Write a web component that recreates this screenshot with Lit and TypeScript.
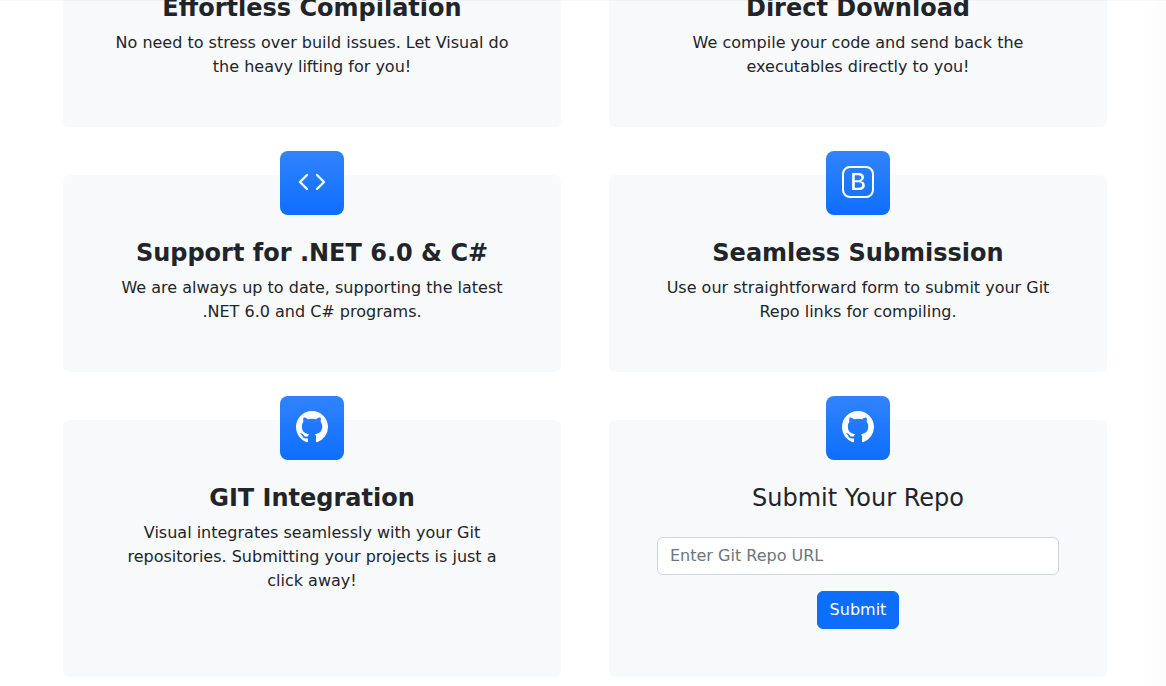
import { LitElement, html, css, svg } from "lit";
import { customElement, property } from "lit/decorators.js";

const icons = {
  collection: svg`<path d="M2.5 3.5a.5.5 0 0 1 0-1h11a.5.5 0 0 1 0 1zm2-2a.5.5 0 0 1 0-1h7a.5.5 0 0 1 0 1zM0 13a1.5 1.5 0 0 0 1.5 1.5h13A1.5 1.5 0 0 0 16 13V6a1.5 1.5 0 0 0-1.5-1.5h-13A1.5 1.5 0 0 0 0 6zm1.5.5A.5.5 0 0 1 1 13V6a.5.5 0 0 1 .5-.5h13a.5.5 0 0 1 .5.5v7a.5.5 0 0 1-.5.5z"/>`,
  download: svg`<path d="M.5 9.9a.5.5 0 0 1 .5.5v2.5a1 1 0 0 0 1 1h12a1 1 0 0 0 1-1v-2.5a.5.5 0 0 1 1 0v2.5a2 2 0 0 1-2 2H2a2 2 0 0 1-2-2v-2.5a.5.5 0 0 1 .5-.5"/><path d="M7.646 11.854a.5.5 0 0 0 .708 0l3-3a.5.5 0 0 0-.708-.708L8.5 10.293V1.5a.5.5 0 0 0-1 0v8.793L5.354 8.146a.5.5 0 1 0-.708.708z"/>`,
  code: svg`<path stroke="currentColor" stroke-width=".12" d="M5.854 4.854a.5.5 0 1 0-.708-.708l-3.5 3.5a.5.5 0 0 0 0 .708l3.5 3.5a.5.5 0 0 0 .708-.708L2.707 8zm4.292 0a.5.5 0 0 1 .708-.708l3.5 3.5a.5.5 0 0 1 0 .708l-3.5 3.5a.5.5 0 0 1-.708-.708L13.293 8z"/>`,
  bootstrap: svg`<path d="M5.062 12h3.475c1.804 0 2.888-.908 2.888-2.396 0-1.102-.761-1.916-1.904-2.034v-.1c.832-.14 1.482-.93 1.482-1.816 0-1.3-.955-2.11-2.542-2.11H5.062zm1.313-4.875V4.658h1.78c.973 0 1.542.457 1.542 1.237 0 .802-.604 1.23-1.764 1.23zm0 3.762V8.162h1.822c1.236 0 1.887.463 1.887 1.348 0 .896-.627 1.377-1.811 1.377z"/><path d="M0 4a4 4 0 0 1 4-4h8a4 4 0 0 1 4 4v8a4 4 0 0 1-4 4H4a4 4 0 0 1-4-4zm4-3a3 3 0 0 0-3 3v8a3 3 0 0 0 3 3h8a3 3 0 0 0 3-3V4a3 3 0 0 0-3-3z"/>`,
  github: svg`<path d="M8 0C3.58 0 0 3.58 0 8c0 3.54 2.29 6.53 5.47 7.59.4.07.55-.17.55-.38 0-.19-.01-.82-.01-1.49-2.01.37-2.53-.49-2.69-.94-.09-.23-.48-.94-.82-1.13-.28-.15-.68-.52-.01-.53.63-.01 1.08.58 1.23.82.72 1.21 1.87.87 2.33.66.07-.52.28-.87.51-1.07-1.78-.2-3.64-.89-3.64-3.95 0-.87.31-1.59.82-2.15-.08-.2-.36-1.02.08-2.12 0 0 .67-.21 2.2.82.64-.18 1.32-.27 2-.27s1.36.09 2 .27c1.53-1.04 2.2-.82 2.2-.82.44 1.1.16 1.92.08 2.12.51.56.82 1.27.82 2.15 0 3.07-1.87 3.75-3.65 3.95.29.25.54.73.54 1.48 0 1.07-.01 1.93-.01 2.2 0 .21.15.46.55.38A8.01 8.01 0 0 0 16 8c0-4.42-3.58-8-8-8"/>`,
};

type IconName = keyof typeof icons;

@customElement("feature-card")
export class FeatureCard extends LitElement {
  @property() icon: IconName = "code";
  @property() heading = "";
  @property({ type: Boolean }) light = false;

  static styles = css`
    :host {
      display: flex;
      flex-direction: column;
      align-items: center;
      box-sizing: border-box;
      min-width: 0;
      padding: 0 48px 48px;
      border-radius: 6px;
      background: #f8f9fb;
      text-align: center;
    }
    .tile {
      display: flex;
      align-items: center;
      justify-content: center;
      box-sizing: border-box;
      width: 64px;
      height: 64px;
      margin: -24px 0 24px;
      padding-bottom: 2px;
      border-radius: 8px;
      color: #fff;
      background: #0d6efd linear-gradient(180deg, rgba(255, 255, 255, 0.15), rgba(255, 255, 255, 0));
    }
    .heading {
      margin: 0 0 8px;
      font-size: 24px;
      line-height: 29px;
      font-weight: 700;
    }
    .light {
      font-weight: 400;
    }
    .body {
      align-self: stretch;
    }
  `;

  render() {
    return html`
      <div class="tile">
        <svg width="32" height="32" viewBox="0 0 16 16" fill="currentColor" aria-hidden="true">${icons[this.icon]}</svg>
      </div>
      <h2 class="heading ${this.light ? "light" : ""}">${this.heading}</h2>
      <div class="body"><slot></slot></div>
    `;
  }
}

const features: { icon: IconName; title: string; text: string }[] = [
  { icon: "collection", title: "Effortless Compilation", text: "No need to stress over build issues. Let Visual do the heavy lifting for you!" },
  { icon: "download", title: "Direct Download", text: "We compile your code and send back the executables directly to you!" },
  { icon: "code", title: "Support for .NET 6.0 & C#", text: "We are always up to date, supporting the latest .NET 6.0 and C# programs." },
  { icon: "bootstrap", title: "Seamless Submission", text: "Use our straightforward form to submit your Git Repo links for compiling." },
  { icon: "github", title: "GIT Integration", text: "Visual integrates seamlessly with your Git repositories. Submitting your projects is just a click away!" },
];

@customElement("app-root")
export class AppRoot extends LitElement {
  static styles = css`
    :host {
      display: block;
      position: relative;
      box-sizing: border-box;
      min-height: 100vh;
      overflow: hidden;
      background: #fff;
      color: #212529;
      font-family: "DejaVu Sans", sans-serif;
      font-size: 16px;
      line-height: 24px;
    }
    .features {
      display: grid;
      grid-template-columns: repeat(2, minmax(0, 1fr));
      gap: 48px;
      margin-top: -70px;
      padding: 0 59px 8px 63px;
    }
    .text {
      margin: 0;
    }
    .form {
      display: flex;
      flex-direction: column;
      align-items: center;
      gap: 16px;
      margin: 0;
      padding-top: 16px;
    }
    .field {
      display: block;
      align-self: stretch;
    }
    .input {
      display: block;
      box-sizing: border-box;
      width: 100%;
      height: 38px;
      padding: 5px 12px 7px;
      border: 1px solid #ced4da;
      border-radius: 6px;
      background: #fff;
      color: inherit;
      font: inherit;
    }
    .input::placeholder {
      color: #6c757d;
      opacity: 1;
    }
    .submit {
      height: 38px;
      padding: 6px 12px;
      border: 1px solid #0d6efd;
      border-radius: 6px;
      background: #0d6efd;
      color: #fff;
      font: inherit;
      cursor: pointer;
    }
    .top-edge,
    .side-shade {
      position: absolute;
      top: 0;
      right: 0;
      pointer-events: none;
    }
    .top-edge {
      left: 0;
      height: 1px;
      background: rgba(0, 0, 0, 0.03);
    }
    .side-shade {
      bottom: 0;
      width: 20px;
      background: linear-gradient(90deg, rgba(0, 0, 0, 0), rgba(0, 0, 0, 0.016));
    }
  `;

  render() {
    return html`
      <section class="features">
        ${features.map(
          (f) => html`<feature-card .icon=${f.icon} .heading=${f.title}><p class="text">${f.text}</p></feature-card>`
        )}
        <feature-card .icon=${"github"} .heading=${"Submit Your Repo"} light>
          <form class="form" @submit=${(e: Event) => e.preventDefault()}>
            <label class="field">
              <input class="input" type="text" name="repo" placeholder="Enter Git Repo URL" aria-label="Git Repo URL" />
            </label>
            <button class="submit" type="submit">Submit</button>
          </form>
        </feature-card>
      </section>
      <div class="top-edge"></div>
      <div class="side-shade"></div>
    `;
  }
}
